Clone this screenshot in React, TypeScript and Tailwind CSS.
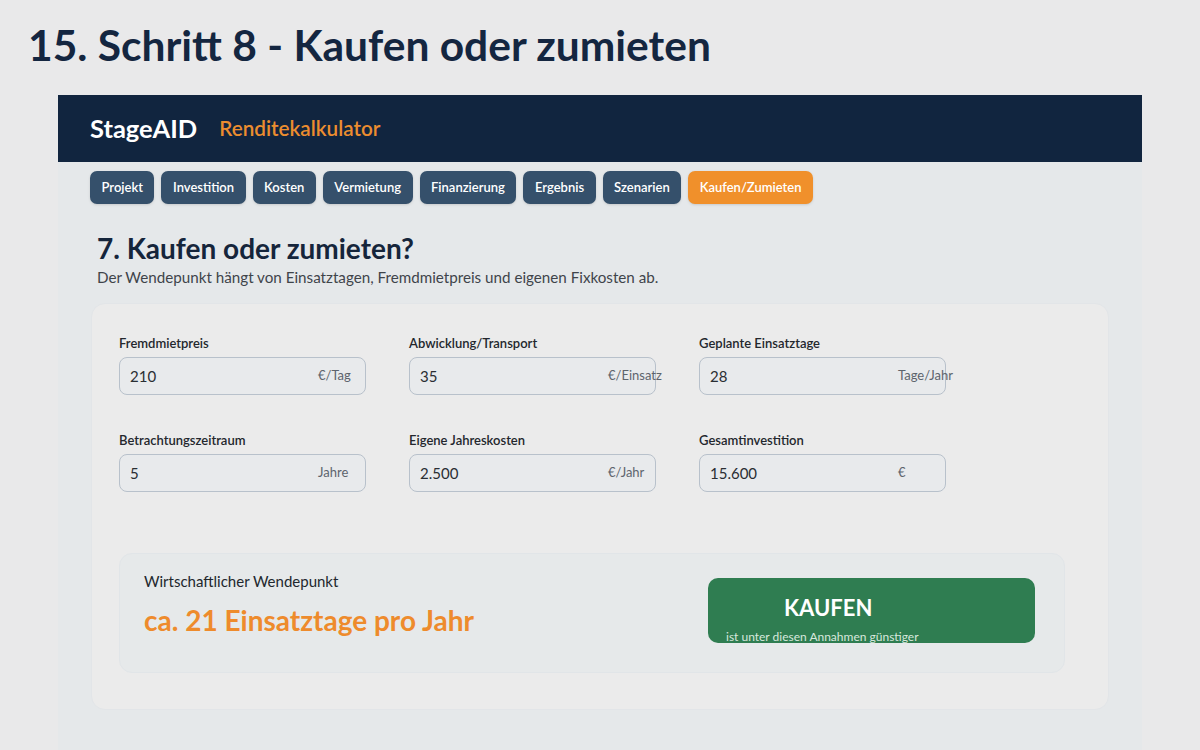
import type { ReactNode } from 'react'

const tabs = ['Projekt', 'Investition', 'Kosten', 'Vermietung', 'Finanzierung', 'Ergebnis', 'Szenarien', 'Kaufen/Zumieten']

type Field = { label: string; value: string; unit: string }

const fields: Field[] = [
    { label: 'Fremdmietpreis', value: '210', unit: '€/Tag' },
    { label: 'Abwicklung/Transport', value: '35', unit: '€/Einsatz' },
    { label: 'Geplante Einsatztage', value: '28', unit: 'Tage/Jahr' },
    { label: 'Betrachtungszeitraum', value: '5', unit: 'Jahre' },
    { label: 'Eigene Jahreskosten', value: '2.500', unit: '€/Jahr' },
    { label: 'Gesamtinvestition', value: '15.600', unit: '€' },
]

function Tab({ children, active }: { children: ReactNode; active?: boolean }) {
    return (
        <button
            className={
                active
                    ? 'h-[33px] rounded-[7px] px-[11.5px] text-[13px] font-semibold text-white bg-[#f0902b] shadow-sm'
                    : 'h-[33px] rounded-[7px] px-[11.5px] text-[13px] font-semibold text-white bg-[#35506b] shadow-sm'
            }
        >
            {children}
        </button>
    )
}

function InputField({ field }: { field: Field }) {
    return (
        <div className="flex flex-col">
            <label className="text-[13px] font-semibold text-[#23272d] mb-[6px] leading-[16px]">{field.label}</label>
            <div className="flex items-center w-[247px] h-[38px] rounded-[8px] border border-[#b8c1cb] bg-[#e8eaec] pl-[10px]">
                <span className="w-[188px] shrink-0 text-[15px] text-[#2a2e33]">{field.value}</span>
                <span className="whitespace-nowrap text-[13px] text-[#5d646c]">{field.unit}</span>
            </div>
        </div>
    )
}

export default function App() {
    return (
        <div className="min-h-[750px] w-[1200px] bg-[#e9e9ea] overflow-hidden" style={{ fontFamily: 'Lato, "Open Sans", sans-serif' }}>
            {/* Slide title */}
            <h1 className="pl-[28px] pt-[19px] h-[95px] text-[42.5px] font-bold leading-[52px] text-[#142640]">
                15. Schritt 8 - Kaufen oder zumieten
            </h1>

            <div className="mx-[58px] bg-[#e5e8ea] min-h-[655px]">
                {/* Header */}
                <div className="h-[67px] bg-[#11253f] flex items-center pl-[32px] gap-[22px]">
                    <span className="text-[25.5px] font-bold text-white">StageAID</span>
                    <span className="text-[20.7px] font-semibold text-[#ec8d2f] mt-[1px]">Renditekalkulator</span>
                </div>

                {/* Tabs */}
                <nav className="flex gap-[7px] pl-[32px] pt-[9px]">
                    {tabs.map((t) => (
                        <Tab key={t} active={t === 'Kaufen/Zumieten'}>
                            {t}
                        </Tab>
                    ))}
                </nav>

                <div className="pl-[39px] pt-[27px]">
                    <h2 className="text-[28px] font-bold text-[#15253b] leading-[34px]">7. Kaufen oder zumieten?</h2>
                    <p className="text-[15.2px] text-[#3f444a] mt-[2px] leading-[20px]">
                        Der Wendepunkt hängt von Einsatztagen, Fremdmietpreis und eigenen Fixkosten ab.
                    </p>
                </div>

                {/* Main card */}
                <div className="ml-[33px] mr-[33px] mt-[16px] rounded-[14px] bg-[#ebebeb] border border-[#e2e5e8] pt-[31px] pl-[27px] pr-[43px] pb-[36px]">
                    <div className="grid grid-cols-[290px_290px_290px] gap-y-[37px]">
                        {fields.map((f) => (
                            <InputField key={f.label} field={f} />
                        ))}
                    </div>

                    {/* Result */}
                    <div className="mt-[61px] rounded-[13px] bg-[#e6e9ea] border border-[#e1e5e8] h-[120px] flex pl-[24px] pr-[29px] pt-[17px]">
                        <div className="flex-1">
                            <div className="text-[15px] text-[#22272d] leading-[20px]">Wirtschaftlicher Wendepunkt</div>
                            <div className="text-[28px] font-bold text-[#ee8b2c] mt-[12px] leading-[34px]">ca. 21 Einsatztage pro Jahr</div>
                        </div>
                        {/* verdict box clips its second line at the bottom */}
                        <div className="mt-[7px] w-[327px] h-[65px] rounded-[10px] bg-[#2f7d51] overflow-hidden pl-[18px]">
                            <div className="text-[22px] font-bold text-white pl-[58px] pt-[17px] leading-[26px]">KAUFEN</div>
                            <div className="text-[12px] text-[#d7e8dd] mt-[9px] leading-[14px]">ist unter diesen Annahmen günstiger</div>
                        </div>
                    </div>
                </div>
            </div>
        </div>
    )
}
